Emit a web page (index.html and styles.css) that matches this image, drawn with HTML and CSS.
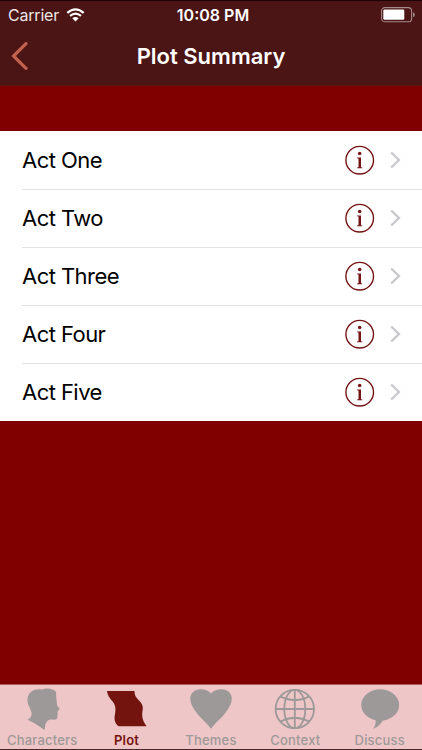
FILE: index.html
```
<!DOCTYPE html>
<html lang="en">
<head>
  <meta charset="UTF-8">
  <title>Plot Summary</title>
  <link rel="stylesheet" href="styles.css">
</head>
<body>
  <svg class="sprite" width="0" height="0">
    <symbol id="info" viewBox="0 0 30 30">
      <circle cx="14.7" cy="15.2" r="13.8" fill="none" stroke="#751414" stroke-width="1.4"/>
      <circle cx="14.7" cy="8.600" r="1.75" fill="#751414"/>
      <path d="M12.100 12.400h3.900v9.800l1.300.3v.8h-5.300v-.8l1.500-.3v-8.700l-1.400-.3z" fill="#751414"/>
    </symbol>
    <symbol id="chevron" viewBox="0 0 11 18">
      <path d="M1.200 1.500L9 9l-7.800 7.500" fill="none" stroke="#c7c7cc" stroke-width="2.3"/>
    </symbol>
  </svg>

  <header class="header">
    <div class="status-bar">
      <div class="carrier">
        <span>Carrier</span>
        <svg width="19" height="14" viewBox="0 0 19 14">
          <path d="M1.3 4.9Q9.5-2.1 17.7 4.9" fill="none" stroke="#fff" stroke-width="2.3"/>
          <path d="M4 7.9q5.5-4.7 11 0" fill="none" stroke="#fff" stroke-width="2.2"/>
          <path d="M6.3 10.3q3.2-2.8 6.4 0l-3.2 3.2z" fill="#fff"/>
        </svg>
      </div>
      <div class="time">10:08 PM</div>
      <svg class="battery" width="34" height="16" viewBox="0 0 34 16">
        <rect x=".6" y=".6" width="30" height="14.2" rx="3.4" fill="none" stroke="#a58a8b" stroke-width="1.1"/>
        <rect x="2.3" y="2.4" width="21" height="10.4" rx="1.4" fill="#fff"/>
        <path d="M32 5.2q1.8.8 1.8 2.5T32 10.2z" fill="#a58a8b"/>
      </svg>
    </div>
    <div class="nav-bar">
      <svg class="back" width="17" height="28" viewBox="0 0 17 28">
        <path d="M15 1.600L2.500 14 15 26.400" fill="none" stroke="#c3614f" stroke-width="3.2" stroke-linecap="round"/>
      </svg>
      <h1>Plot Summary</h1>
    </div>
  </header>

  <main class="content">
    <ul class="act-list">
      <li class="act">
        <span class="act-name">Act One</span>
        <svg class="info"><use href="#info"/></svg>
        <svg class="chevron"><use href="#chevron"/></svg>
      </li>
      <li class="act">
        <span class="act-name">Act Two</span>
        <svg class="info"><use href="#info"/></svg>
        <svg class="chevron"><use href="#chevron"/></svg>
      </li>
      <li class="act">
        <span class="act-name">Act Three</span>
        <svg class="info"><use href="#info"/></svg>
        <svg class="chevron"><use href="#chevron"/></svg>
      </li>
      <li class="act">
        <span class="act-name">Act Four</span>
        <svg class="info"><use href="#info"/></svg>
        <svg class="chevron"><use href="#chevron"/></svg>
      </li>
      <li class="act">
        <span class="act-name">Act Five</span>
        <svg class="info"><use href="#info"/></svg>
        <svg class="chevron"><use href="#chevron"/></svg>
      </li>
    </ul>
  </main>

  <nav class="tab-bar">
    <div class="tab">
      <svg width="44" height="44" viewBox="0 0 44 44">
        <path d="M11.500 4.500C14 2.500 18 2 22 2.500C25 1.300 29 .8 32 2.500C35 3 37 5 36 8L36.800 15.500L37 18L39.800 22.300L37.700 24L37.500 29.500C37.500 32.500 36 33 33 32.700C29 32 26.500 34 25.300 37.500L24.700 43L15 36.500L7.500 32.700C10.500 31.500 12 29 11.500 25.500L9.500 20C6.500 15 6.500 8 11.500 4.500z" fill="currentColor"/>
      </svg>
      <span>Characters</span>
    </div>
    <div class="tab active">
      <svg width="44" height="44" viewBox="0 0 44 44">
        <path d="M2 4H29.500C29.300 8 31 10.500 34 13.500C37.500 17 38.300 19.500 37.500 24C36.500 30 38 34.500 41.700 39.300H13.500C9.500 36 9 32 10 27C11 22 10.500 18 8 15C4.500 11 2.500 8.500 2 4z" fill="currentColor"/>
      </svg>
      <span>Plot</span>
    </div>
    <div class="tab">
      <svg width="44" height="44" viewBox="0 0 44 44">
        <path d="M22 41.700C18 36 12 32 7 25C3.500 20 1.300 16 1.300 12C1.300 6 5.500 2.200 11.500 2.200C16.500 2.200 20 4 22 6.500C24 4 27.500 2.200 32.500 2.200C38.500 2.200 42.800 6 42.800 12C42.800 16 40.500 20 37 25C32 32 26 36 22 41.700z" fill="currentColor"/>
      </svg>
      <span>Themes</span>
    </div>
    <div class="tab">
      <svg width="44" height="44" viewBox="0 0 44 44">
        <g fill="none" stroke="currentColor" stroke-width="1.8">
          <circle cx="21.800" cy="22" r="19.200"/>
          <ellipse cx="21.800" cy="22" rx="10.500" ry="19.200"/>
          <path d="M21.800 2.500v39M2.500 22h39M7.500 9.500q14.300 7.500 28.600 0M7.500 34.500q14.300-7.500 28.600 0"/>
        </g>
      </svg>
      <span>Context</span>
    </div>
    <div class="tab">
      <svg width="44" height="44" viewBox="0 0 44 44">
        <ellipse cx="22.200" cy="18" rx="19" ry="15.700" fill="currentColor"/>
        <path d="M17.500 32C18 36 17.500 39 15 41.700C20 40 23.500 37 25 32z" fill="currentColor"/>
      </svg>
      <span>Discuss</span>
    </div>
  </nav>
</body>
</html>
```
FILE: styles.css
```
* {
  box-sizing: border-box;
}

body {
  margin: 0;
  height: 750px;
  display: flex;
  flex-direction: column;
  overflow: hidden;
  background: #800000;
  font-family: Inter, "Liberation Sans", sans-serif;
}

.sprite {
  position: absolute;
}

.header {
  height: 86px;
  background: #4b1415;
  border-top: 1px solid #1c0404;
  border-bottom: 1px solid #5e1414;
  color: #fff;
}

.status-bar {
  height: 27px;
  display: grid;
  grid-template-columns: 1fr auto 1fr;
  align-items: center;
  padding: 0 7px 0 8px;
  font-size: 16px;
}

.carrier {
  display: flex;
  align-items: center;
  gap: 7px;
  color: #eee6e6;
  letter-spacing: -0.2px;
}

.time {
  padding-left: 3px;
  font-weight: 600;
  font-size: 16px;
}

.battery {
  justify-self: end;
}

.nav-bar {
  height: 56px;
  display: grid;
  grid-template-columns: 40px 1fr 40px;
  align-items: center;
}

.back {
  margin-left: 11px;
}

.nav-bar h1 {
  margin: 0;
  text-align: center;
  font-size: 22px;
  font-weight: 600;
}

.content {
  flex: 1;
  padding-top: 45px;
}

.act-list {
  margin: 0;
  padding: 0 0 0 22px;
  list-style: none;
  background: #fff;
}

.act {
  height: 58px;
  display: flex;
  align-items: center;
  padding-right: 21px;
}

.act + .act {
  padding-bottom: 1px;
  border-top: 1px solid #e3e2e4;
}

.act-name {
  flex: 1;
  font-size: 22px;
  letter-spacing: -0.55px;
  color: #000;
}

.info {
  width: 30px;
  height: 30px;
  margin-right: 15px;
}

.chevron {
  width: 11px;
  height: 18px;
}

.tab-bar {
  height: 66px;
  display: grid;
  grid-template-columns: repeat(5, 84.4px);
  background: #efc6c7;
  border-top: 1px solid #ad6060;
  border-bottom: 1px solid #4b2527;
}

.tab {
  display: flex;
  flex-direction: column;
  align-items: center;
  padding-top: 2px;
  color: #9d9999;
  font-size: 13px;
  font-weight: 500;
  line-height: 16px;
  letter-spacing: 0.2px;
}

.tab span {
  margin-top: 1px;
}

.tab.active {
  color: #74140f;
  font-weight: 600;
}
```
